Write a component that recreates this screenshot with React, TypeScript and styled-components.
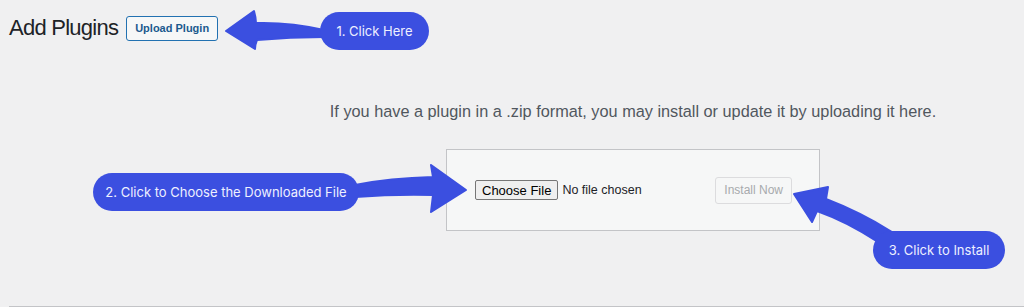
import styled, { createGlobalStyle } from "styled-components";

const GlobalStyle = createGlobalStyle`
  body {
    margin: 0;
    background: #f0f0f1;
    font-family: "Liberation Sans", Arial, sans-serif;
  }
`;

const Page = styled.div`
  position: relative;
  width: 1024px;
  height: 307px;
  box-sizing: border-box;
  padding-left: 9px;
  overflow: hidden;
`;

const Section = styled.div`
  height: 306px;
  border-bottom: 1px solid #c3c4c7;
  display: flex;
  flex-direction: column;
`;

const Header = styled.div`
  display: flex;
  align-items: center;
  gap: 8px;
  padding-top: 15px;
`;

const Title = styled.h1`
  margin: 0;
  font-size: 22px;
  font-weight: 400;
  letter-spacing: -0.75px;
  color: #1d2327;
`;

const TitleAction = styled.button`
  height: 25px;
  box-sizing: border-box;
  padding: 0 8px;
  border: 1px solid #2271b1;
  border-radius: 3px;
  background: #f6f7f7;
  color: #1b5a8e;
  font-family: "Liberation Sans", Arial, sans-serif;
  font-size: 11px;
  font-weight: 700;
  cursor: pointer;
`;

const UploadArea = styled.div`
  padding-left: 233px;
  display: flex;
  flex-direction: column;
  align-items: center;
`;

const Help = styled.p`
  margin: 61px 0 0;
  font-size: 16.3px;
  color: #50575e;
  text-align: center;
  white-space: nowrap;
`;

const UploadForm = styled.form`
  margin-top: 28px;
  width: 374px;
  height: 82px;
  box-sizing: border-box;
  border: 1px solid #c3c4c7;
  background: #f6f7f7;
  display: flex;
  align-items: center;
  justify-content: space-between;
  padding: 0 27px 0 28px;
`;

const FilePicker = styled.label`
  display: flex;
  align-items: center;
  gap: 4px;
`;

const ChooseButton = styled.span`
  height: 20px;
  box-sizing: border-box;
  padding: 0 6px;
  display: inline-flex;
  align-items: center;
  border: 1px solid #767676;
  border-radius: 2px;
  background: #efefef;
  color: #000;
  font-size: 13px;
`;

const FileName = styled.span`
  font-size: 12.5px;
  color: #1d2327;
`;

const InstallButton = styled.button`
  height: 27px;
  box-sizing: border-box;
  padding: 0 8px;
  border: 1px solid #dcdcde;
  border-radius: 3px;
  background: #f6f7f7;
  color: #a7aaad;
  font-family: "Liberation Sans", Arial, sans-serif;
  font-size: 12px;
`;

const Overlay = styled.svg`
  position: absolute;
  inset: 0;
  pointer-events: none;
`;

const Callout = styled.div<{ x: number; y: number; w: number }>`
  position: absolute;
  left: ${(p) => p.x}px;
  top: ${(p) => p.y}px;
  width: ${(p) => p.w}px;
  height: 38px;
  border-radius: 19px;
  background: #3b4fe0;
  color: #eef0ff;
  font-family: Inter, "Liberation Sans", sans-serif;
  font-size: 13px;
  display: flex;
  align-items: center;
  justify-content: center;
`;

const arrows = [
  "M226,31 L254,11 Q256,18 256,23 Q290,22 324,30 L324,37 Q290,37 257,40 Q255,45 255,49 Z",
  "M355,185 Q390,178 433,177 L431,165 L466,190 L431,212 L433,195 Q395,194 355,197 Z",
  "M794,194 L828,187 L826,199 Q860,212 892,232 L878,242 Q848,222 817,211 L812,222 Z",
];

export default function App() {
  return (
    <>
      <GlobalStyle />
      <Page>
        <Section>
          <Header>
            <Title>Add Plugins</Title>
            <TitleAction>Upload Plugin</TitleAction>
          </Header>
          <UploadArea>
            <Help>
              If you have a plugin in a .zip format, you may install or update
              it by uploading it here.
            </Help>
            <UploadForm>
              <FilePicker>
                <ChooseButton>Choose File</ChooseButton>
                <FileName>No file chosen</FileName>
              </FilePicker>
              <InstallButton type="button" disabled>
                Install Now
              </InstallButton>
            </UploadForm>
          </UploadArea>
        </Section>
        <Overlay width="1024" height="307">
          {arrows.map((d, i) => (
            <path
              key={i}
              d={d}
              fill="#3b4fe0"
              stroke="#3b4fe0"
              strokeWidth="2"
              strokeLinejoin="round"
            />
          ))}
        </Overlay>
        <Callout x={320} y={12} w={109}>
          1. Click Here
        </Callout>
        <Callout x={93} y={173} w={266}>
          2. Click to Choose the Downloaded File
        </Callout>
        <Callout x={873} y={231} w={132}>
          3. Click to Install
        </Callout>
      </Page>
    </>
  );
}
